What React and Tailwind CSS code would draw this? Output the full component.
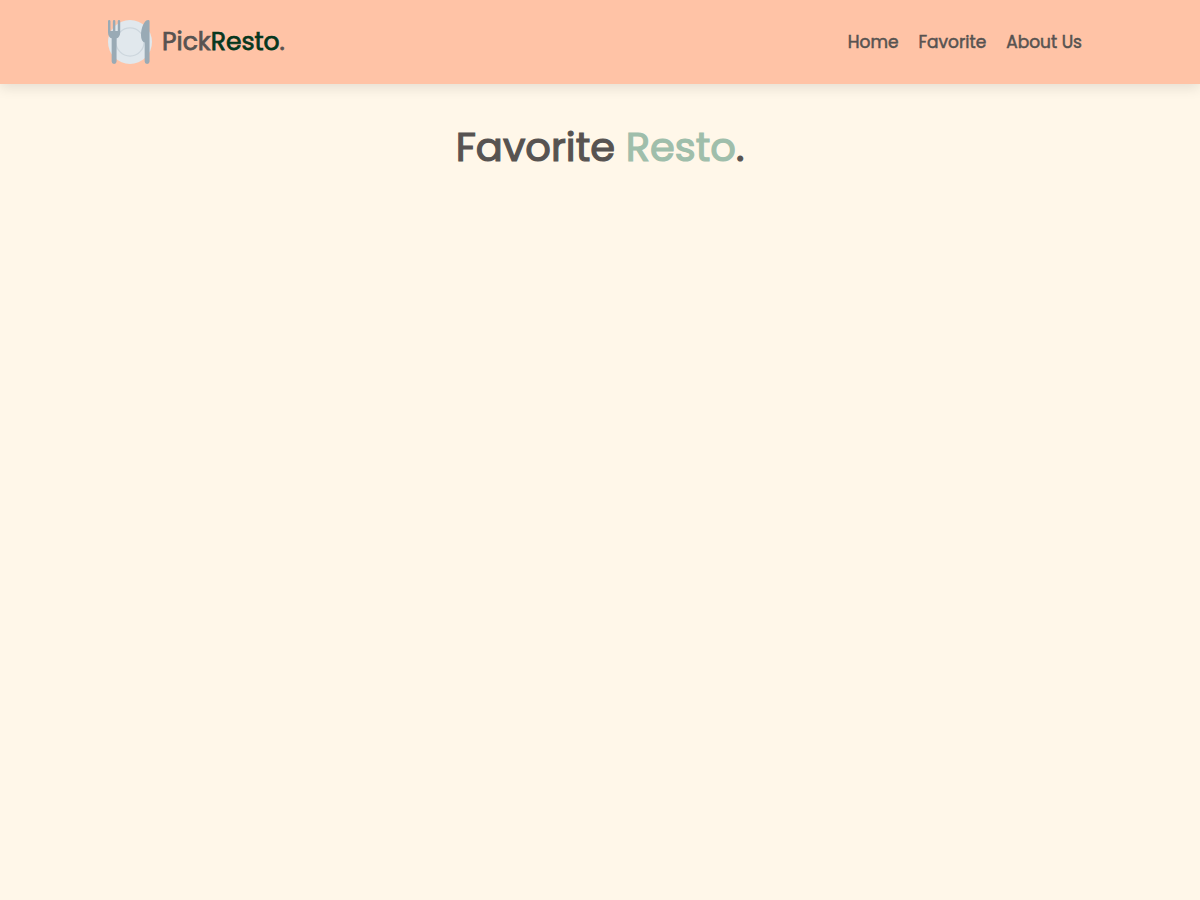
function PlateIcon() {
  return (
    <svg viewBox="0 0 36 36" className="size-11 shrink-0" aria-hidden="true">
      <circle cx="18" cy="18" r="18" fill="#E1E8ED" />
      <circle cx="18" cy="18" r="11.5" fill="none" stroke="#CCD6DD" strokeWidth="1" />
      <g fill="#99AAB5">
        <path d="M0 1a1 1 0 0 1 2 0v8h2V1a1 1 0 0 1 2 0v8h2V1a1 1 0 0 1 2 0v9c0 2.700-1.200 4.600-3 5v19a2 2 0 0 1-4 0V15c-1.800-.4-3-2.300-3-5z" />
        <path d="M33 0c-3.500 0-6 6.500-6 12.500C27 16 28.200 18 30 18.500V34a2 2 0 0 0 4 0V1a1 1 0 0 0-1-1z" />
      </g>
    </svg>
  );
}

const links = ["Home", "Favorite", "About Us"];

export default function App() {
  return (
    <div className="min-h-screen bg-[#fff7e9] font-['Poppins','Inter',sans-serif] font-normal text-[#575351] [-webkit-text-stroke:0.03em]">
      <header className="bg-[#ffc3a6] shadow-[0_4px_12px_rgba(0,0,0,0.1)]">
        <div className="mx-auto flex w-full max-w-[1200px] items-center justify-between px-[9%] py-5">
          <a href="#home" className="flex items-center gap-2.5 text-[25px] leading-11 [-webkit-text-stroke:0.03em]">
            <PlateIcon />
            <span>Pick<span className="text-[#06371e]">Resto</span>.</span>
          </a>
          <nav className="pr-2.5" aria-label="Main">
            <ul className="flex gap-5 text-[17px] leading-6 [-webkit-text-stroke:0.03em]">
              {links.map((label) => (
                <li key={label}><a href="#page">{label}</a></li>
              ))}
            </ul>
          </nav>
        </div>
      </header>
      <main className="px-5 pt-8">
        <h1 className="text-center text-[40px] leading-[63px] [-webkit-text-stroke:0.03em]">
          Favorite <span className="text-[#9fbeab]">Resto</span>.
        </h1>
      </main>
    </div>
  );
}
